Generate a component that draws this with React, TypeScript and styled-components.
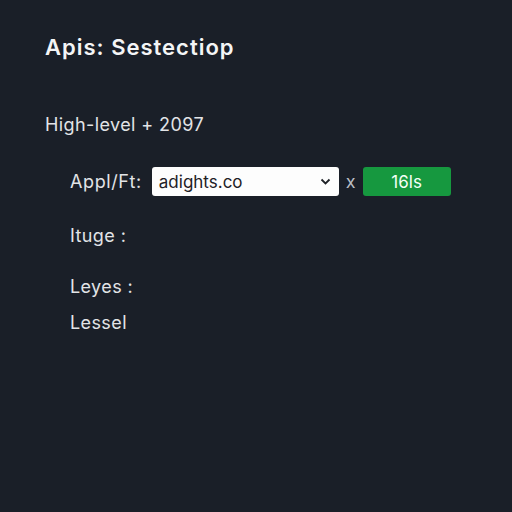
import React, { FC } from 'react';
import styled, { createGlobalStyle } from 'styled-components';

const GlobalStyle = createGlobalStyle`
  html, body {
    margin: 0;
    padding: 0;
    background: #1a1f28;
  }
  body {
    width: 512px;
    height: 512px;
    overflow: hidden;
    font-family: Inter, "Liberation Sans", sans-serif;
    color: #e6e7e9;
  }
`;

const Page = styled.div`
  padding: 35px 0 0 45px;
`;

const Title = styled.h1`
  margin: 0;
  font-size: 22px;
  line-height: 25px;
  font-weight: 600;
  letter-spacing: 1px;
  color: #f4f5f6;
`;

const Subtitle = styled.div`
  margin-top: 54px;
  font-size: 18px;
  line-height: 22px;
  letter-spacing: 0.4px;
  color: #e2e4e7;
`;

const Form = styled.div`
  display: flex;
  flex-direction: column;
  padding-left: 25px;
  margin-top: 31px;
`;

const Row = styled.div`
  display: flex;
  align-items: center;
  height: 29px;
`;

const Label = styled.span`
  font-size: 18px;
  letter-spacing: 0.6px;
  color: #e2e4e7;
  margin-right: 10px;
`;

const Select = styled.div`
  display: flex;
  align-items: center;
  justify-content: space-between;
  box-sizing: border-box;
  width: 187px;
  height: 29px;
  padding: 0 8px 0 7px;
  background: #fdfdfd;
  border-radius: 3px;
  font-size: 17px;
  color: #1e2126;
`;

const Times = styled.span`
  margin: 0 7px;
  font-size: 18px;
  color: #b9bdc4;
`;

const GoButton = styled.button`
  width: 88px;
  height: 29px;
  border: 0;
  border-radius: 3px;
  background: #16983f;
  color: #f4fff6;
  font-family: inherit;
  font-size: 17px;
  padding: 0;
`;

const Field = styled.div<{ $gap: number }>`
  margin-top: ${(p) => p.$gap}px;
  font-size: 18px;
  line-height: 22px;
  letter-spacing: 0.4px;
  color: #e2e4e7;
`;

const Chevron: FC = () => (
  <svg width="11" height="7" viewBox="0 0 11 7">
    <path d="M1.5 1.5 L5.5 5.5 L9.5 1.5" fill="none" stroke="#1e2126" strokeWidth="1.8" />
  </svg>
);

const App: FC = function App() {
  return (
    <Page>
      <GlobalStyle />
      <Title>Apis: Sestectiop</Title>
      <Subtitle>High-level + 2097</Subtitle>

      <Form>
        <Row>
          <Label>Appl/Ft:</Label>
          <Select>
            <span>adights.co</span>
            <Chevron />
          </Select>
          <Times>x</Times>
          <GoButton>16ls</GoButton>
        </Row>

        <Field $gap={29}>Ituge :</Field>
        <Field $gap={29}>Leyes :</Field>
        <Field $gap={14}>Lessel</Field>
      </Form>
    </Page>
  );
};

export default App;
